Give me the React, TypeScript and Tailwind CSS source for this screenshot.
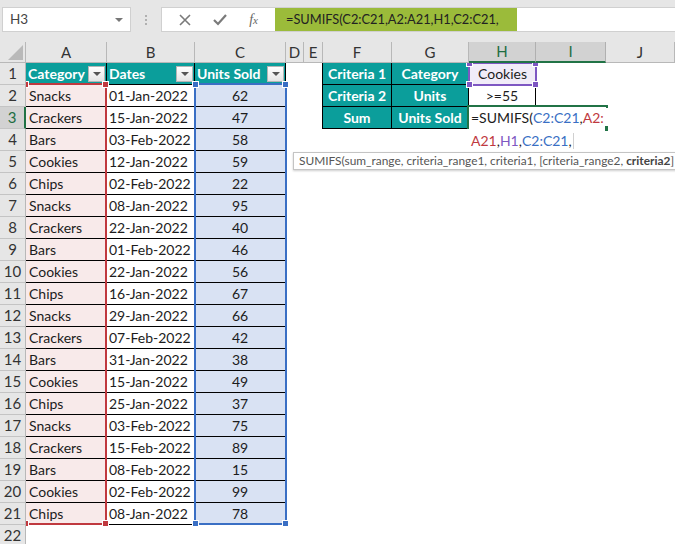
const FONT = "font-['Lato','Open_Sans',sans-serif]";

const rows: [string, string, number][] = [
  ["Snacks", "01-Jan-2022", 62],
  ["Crackers", "15-Jan-2022", 47],
  ["Bars", "03-Feb-2022", 58],
  ["Cookies", "12-Jan-2022", 59],
  ["Chips", "02-Feb-2022", 22],
  ["Snacks", "08-Jan-2022", 95],
  ["Crackers", "22-Jan-2022", 40],
  ["Bars", "01-Feb-2022", 46],
  ["Cookies", "22-Jan-2022", 56],
  ["Chips", "16-Jan-2022", 67],
  ["Snacks", "29-Jan-2022", 66],
  ["Crackers", "07-Feb-2022", 42],
  ["Bars", "31-Jan-2022", 38],
  ["Cookies", "15-Jan-2022", 49],
  ["Chips", "25-Jan-2022", 37],
  ["Snacks", "03-Feb-2022", 75],
  ["Crackers", "15-Feb-2022", 89],
  ["Bars", "08-Feb-2022", 15],
  ["Cookies", "02-Feb-2022", 99],
  ["Chips", "08-Jan-2022", 78],
];

const cols: [string, boolean][] = [
  ["A", false], ["B", false], ["C", false], ["D", false], ["E", false],
  ["F", false], ["G", false], ["H", true], ["I", true], ["J", false],
];

function Handle({ className }: { className: string }) {
  return <span className={"absolute w-[7px] h-[7px] border border-white " + className} />;
}

function Filter() {
  return (
    <span className="absolute right-[1px] top-[3px] w-[17px] h-[16px] bg-gradient-to-b from-white to-[#e4e4e4] border border-[#b5b5b5] flex items-center justify-center">
      <span className="w-0 h-0 border-l-[4px] border-r-[4px] border-t-[4px] border-l-transparent border-r-transparent border-t-[#555]" />
    </span>
  );
}

function Head({ children }: { children: string }) {
  return (
    <div className="relative bg-[#0b9e9b] text-white font-bold border-r border-b border-black flex items-center whitespace-nowrap overflow-hidden pl-[2px]">
      {children}
      <Filter />
    </div>
  );
}

function Teal({ children }: { children: string }) {
  return (
    <div className="bg-[#0b9e9b] text-white font-bold border-r border-b border-black flex items-center justify-center whitespace-nowrap">
      {children}
    </div>
  );
}

function RowHead({ n, active }: { n: number; active?: boolean }) {
  return (
    <div className={"relative z-10 flex items-center justify-center border-b border-[#c4c4c4] border-r text-[15px] " + (active ? "bg-[#d2d2d2] text-[#1e6e42] border-r-[#217346] border-r-2" : "bg-[#e6e6e6] text-[#333] border-r-[#b8b8b8]")}>
      {n}
    </div>
  );
}

export default function App() {
  return (
    <div className={"relative w-[675px] h-[544px] overflow-hidden bg-white text-[14px] leading-none text-[#1c1c1c] " + FONT}>
      {/* Formula bar */}
      <div className="h-[42px] bg-[#e6e6e6] flex items-start pt-[7px] pl-[2px]">
        <div className="w-[129px] h-[25px] bg-white border border-[#d0d0d0] flex items-center justify-between pl-[7px] pr-[7px] text-[#444] text-[13.5px]">
          <span>H3</span>
          <span className="w-0 h-0 border-l-[4px] border-r-[4px] border-t-[4px] border-l-transparent border-r-transparent border-t-[#777]" />
        </div>
        <div className="w-[30px] h-[25px] flex flex-col items-center justify-center gap-[2px]">
          <span className="w-[2px] h-[2px] bg-[#b0b0b0]" />
          <span className="w-[2px] h-[2px] bg-[#b0b0b0]" />
          <span className="w-[2px] h-[2px] bg-[#b0b0b0]" />
        </div>
        <div className="w-[114px] h-[25px] bg-white border border-[#d0d0d0] border-r-0 flex items-center justify-around px-[6px]">
          <svg width="12" height="12" viewBox="0 0 12 12" fill="none" stroke="#7a7a7a" strokeWidth="1.6">
            <path d="M1 1l10 10M11 1L1 11" />
          </svg>
          <svg width="14" height="12" viewBox="0 0 14 12" fill="none" stroke="#7a7a7a" strokeWidth="2.2">
            <path d="M1 6l4 4 8-9" />
          </svg>
          <span className="font-['Liberation_Serif',serif] italic text-[#666] text-[14px] whitespace-nowrap">
            f<span className="text-[11px]">x</span>
          </span>
        </div>
        <div className="w-[400px] h-[25px] bg-white border-y border-[#d0d0d0] flex">
          <div className="w-[242px] h-full bg-[#9bbb3a] flex items-center pl-[11px] text-[12.8px] whitespace-nowrap text-[#222]">
            =SUMIFS(C2:C21,A2:A21,H1,C2:C21,
          </div>
        </div>
      </div>

      {/* Sheet */}
      <div className="grid grid-cols-[26px_81px_88px_91px_18px_19px_69px_77px_67px_70px_69px] grid-rows-[21px_repeat(22,22px)]">
        <div className="relative z-10 bg-[#e6e6e6] border-r border-b border-[#b8b8b8] overflow-hidden">
          <svg className="absolute right-[2px] bottom-[2px]" width="15" height="15"><path d="M15 0V15H0Z" fill="#b9b9b9" /></svg>
        </div>
        {cols.map(([c, on]) => (
          <div
            key={c}
            className={"relative z-10 flex items-center justify-center border-r text-[15px] " + (on ? "bg-[#d2d2d2] text-[#1e6e42] border-r-[#b0b0b0] border-b-2 border-b-[#217346]" : "bg-[#e6e6e6] text-[#333] border-r-[#b8b8b8] border-b border-b-[#b8b8b8]")}
          >
            {c}
          </div>
        ))}

        {/* Row 1 */}
        <RowHead n={1} />
        <Head>Category</Head>
        <Head>Dates</Head>
        <Head>Units Sold</Head>
        <div />
        <div className="border-r border-black" />
        <Teal>Criteria 1</Teal>
        <Teal>Category</Teal>
        <div className="bg-[#f1ecf8] flex items-center justify-center">Cookies</div>
        <div className="col-span-2" />

        {rows.map(([cat, date, units], i) => {
          const n = i + 2;
          return (
            <div key={n} className="contents">
              <RowHead n={n} active={n === 3} />
              <div className="bg-[#f8eaea] border-r border-b border-black flex items-center pl-[3px]">{cat}</div>
              <div className="border-r border-b border-black flex items-center pl-[2px] whitespace-nowrap">{date}</div>
              <div className="bg-[#d9e2f3] border-r border-b border-black flex items-center justify-center">{units}</div>
              <div />
              {n === 2 ? (
                <>
                  <div className="border-r border-black" />
                  <Teal>Criteria 2</Teal>
                  <Teal>Units</Teal>
                  <div className="border-r border-black flex items-center justify-center">&gt;=55</div>
                  <div className="col-span-2" />
                </>
              ) : n === 3 ? (
                <>
                  <div className="border-r border-black" />
                  <Teal>Sum</Teal>
                  <Teal>Units Sold</Teal>
                  <div className="col-span-3" />
                </>
              ) : (
                <div className="col-span-6" />
              )}
            </div>
          );
        })}

        <RowHead n={22} />
      </div>

      {/* Range highlights */}
      <div className="absolute left-[24px] top-[83px] w-[83px] h-[442px] border-2 border-[#c0393f] pointer-events-none">
        <Handle className="bg-[#c0393f] -left-[4px] -top-[4px]" />
        <Handle className="bg-[#c0393f] -right-[4px] -top-[4px]" />
        <Handle className="bg-[#c0393f] -left-[4px] -bottom-[4px]" />
        <Handle className="bg-[#c0393f] -right-[4px] -bottom-[4px]" />
      </div>
      <div className="absolute left-[194px] top-[83px] w-[93px] h-[442px] border-2 border-[#3a6fc4] pointer-events-none">
        <Handle className="bg-[#3a6fc4] -left-[4px] -top-[4px]" />
        <Handle className="bg-[#3a6fc4] -right-[4px] -top-[4px]" />
        <Handle className="bg-[#3a6fc4] -left-[4px] -bottom-[4px]" />
        <Handle className="bg-[#3a6fc4] -right-[4px] -bottom-[4px]" />
      </div>
      <div className="absolute left-[468px] top-[62px] w-[69px] h-[24px] border-2 border-[#7e57c2] pointer-events-none">
        <Handle className="bg-[#7e57c2] -left-[4px] -top-[4px]" />
        <Handle className="bg-[#7e57c2] -right-[4px] -top-[4px]" />
        <Handle className="bg-[#7e57c2] -left-[4px] -bottom-[4px]" />
        <Handle className="bg-[#7e57c2] -right-[4px] -bottom-[4px]" />
      </div>

      {/* In-cell editor */}
      <div className="absolute left-[467px] top-[105px] w-[141px] h-[45px] bg-white whitespace-nowrap">
        <div className="h-[24px] border-t-2 border-l-2 border-[#217346] pl-[2px] flex items-center">
          <span>=SUMIFS(</span><span className="text-[#3a6fc4]">C2:C21</span><span>,</span><span className="text-[#c0393f]">A2:</span>
        </div>
        <div className="h-[21px] pl-[4px] pt-[2px] flex items-center">
          <span className="text-[#c0393f]">A21</span><span>,</span><span className="text-[#7e57c2]">H1</span><span>,</span><span className="text-[#3a6fc4]">C2:C21</span><span>,</span>
          <span className="w-px h-[16px] bg-[#d0d0d0] ml-px" />
        </div>
        <span className="absolute right-0 top-0 w-[2px] h-[3px] bg-[#217346]" />
        <span className="absolute right-0 top-[21px] w-[3px] h-[5px] bg-[#217346]" />
      </div>

      {/* Function tooltip */}
      <div className="absolute left-[293px] top-[152px] w-[390px] h-[18px] bg-white border border-[#c4c4c4] shadow-[0_1px_2px_rgba(0,0,0,0.2)] flex items-center pl-[5px] text-[11.9px] text-[#555] whitespace-nowrap">
        SUMIFS(sum_range, criteria_range1, criteria1, [criteria_range2,&nbsp;<b className="text-[#444]">criteria2</b>]
      </div>
    </div>
  );
}
